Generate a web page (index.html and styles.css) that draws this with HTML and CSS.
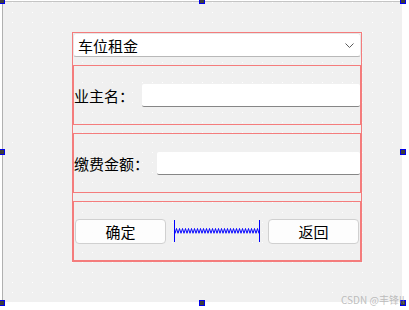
FILE: index.html
```html
<!DOCTYPE html>
<html lang="zh-CN">
  <head>
    <meta charset="UTF-8" />
    <title>车位租金</title>
    <link rel="stylesheet" href="styles.css">
  </head>
  <body>
    <div class="canvas">
      <div class="layout">
        <div class="combo">
          <span>车位租金</span>
          <svg class="chevron" width="9" height="5" viewBox="0 0 9 5">
            <path d="M0.5 0.5 L4.5 4.5 L8.5 0.5" fill="none" stroke="#5a5a5a" stroke-width="1" />
          </svg>
        </div>
        <div class="row">
          <span class="label">业主名：</span>
          <div class="edit"></div>
        </div>
        <div class="row">
          <span class="label">缴费金额：</span>
          <div class="edit"></div>
        </div>
        <div class="row buttons">
          <div class="btn">确定</div>
          <div class="spacer">
            <svg width="100%" height="6">
              <defs>
                <pattern id="spring" width="3" height="6" patternUnits="userSpaceOnUse">
                  <path d="M0 5.5 L1.5 0.5 L3 5.5" fill="none" stroke="#0000ff" stroke-width="1" />
                </pattern>
              </defs>
              <rect x="0" y="0" width="100%" height="6" fill="url(#spring)" />
            </svg>
          </div>
          <div class="btn">返回</div>
        </div>
      </div>

      <div class="handle" style="left: -4px; top: -4px"></div>
      <div class="handle" style="left: 196px; top: -4px"></div>
      <div class="handle" style="left: 397px; top: -4px"></div>
      <div class="handle" style="left: -4px; top: 147px"></div>
      <div class="handle" style="left: 397px; top: 147px"></div>
      <div class="handle" style="left: -4px; top: 298px"></div>
      <div class="handle" style="left: 196px; top: 298px"></div>
      <div class="handle" style="left: 397px; top: 298px"></div>
    </div>
    <div class="watermark">CSDN @丰锋ll</div>
  </body>
</html>
```

FILE: styles.css
```css
body {
  font-family: "Noto Sans CJK SC", "Noto Sans", sans-serif;
  margin: 0;
  width: 409px;
  height: 310px;
  overflow: hidden;
  position: relative;
  background: #fff;
  color: #000;
}
.canvas {
  position: relative;
  box-sizing: border-box;
  width: 400px;
  height: 301px;
  margin: 1px 0 0 2px;
  padding: 30px 0 0 69px;
  border-top: 1px solid #c4c4c4;
  border-left: 1px solid #b0b0b0;
  background-color: #f0f0f0;
  /* designer grid dots every 10px */
  background-image: repeating-linear-gradient(180deg, transparent 0 1px, #f0f0f0 1px 10px),
    repeating-linear-gradient(90deg, transparent 0 9px, #fff 9px 10px);
}
.layout {
  box-sizing: border-box;
  width: 290px;
  height: 230px;
  border: 1px solid #f47c7c;
  display: flex;
  flex-direction: column;
  gap: 8px;
}
.combo {
  box-sizing: border-box;
  height: 24px;
  background: #fff;
  border: 1px solid #e6e6e6;
  border-bottom-color: #b8b8b8;
  border-radius: 3px;
  display: flex;
  align-items: center;
  justify-content: space-between;
  padding: 0 6px 0 4px;
  font-size: 15px;
}
.chevron {
  display: block;
}
.row {
  box-sizing: border-box;
  height: 60px;
  border: 1px solid #f47c7c;
  display: flex;
  align-items: center;
  gap: 8px;
}
.label {
  font-size: 15px;
  white-space: nowrap;
}
.edit {
  flex: 1;
  box-sizing: border-box;
  height: 23px;
  background: #fff;
  border-bottom: 1px solid #868686;
  border-radius: 2px;
}
.buttons {
  padding: 0 1px;
}
.btn {
  box-sizing: border-box;
  width: 91px;
  height: 25px;
  border: 1px solid #d0d0d0;
  border-radius: 4px;
  background: #fdfdfd;
  display: flex;
  align-items: center;
  justify-content: center;
  font-size: 15px;
}
.spacer {
  flex: 1;
  height: 22px;
  border-left: 1px solid #0000ff;
  border-right: 1px solid #0000ff;
  display: flex;
  align-items: center;
}
.spacer svg {
  display: block;
}
.handle {
  position: absolute;
  width: 4px;
  height: 4px;
  border: 1px solid #0000e8;
  background: #3c3c3c;
}
.watermark {
  position: absolute;
  left: 341px;
  top: 292px;
  font-family: "Noto Sans CJK SC", "Liberation Sans", sans-serif;
  font-size: 10px;
  color: rgba(150, 150, 150, 0.6);
  white-space: nowrap;
}
```
